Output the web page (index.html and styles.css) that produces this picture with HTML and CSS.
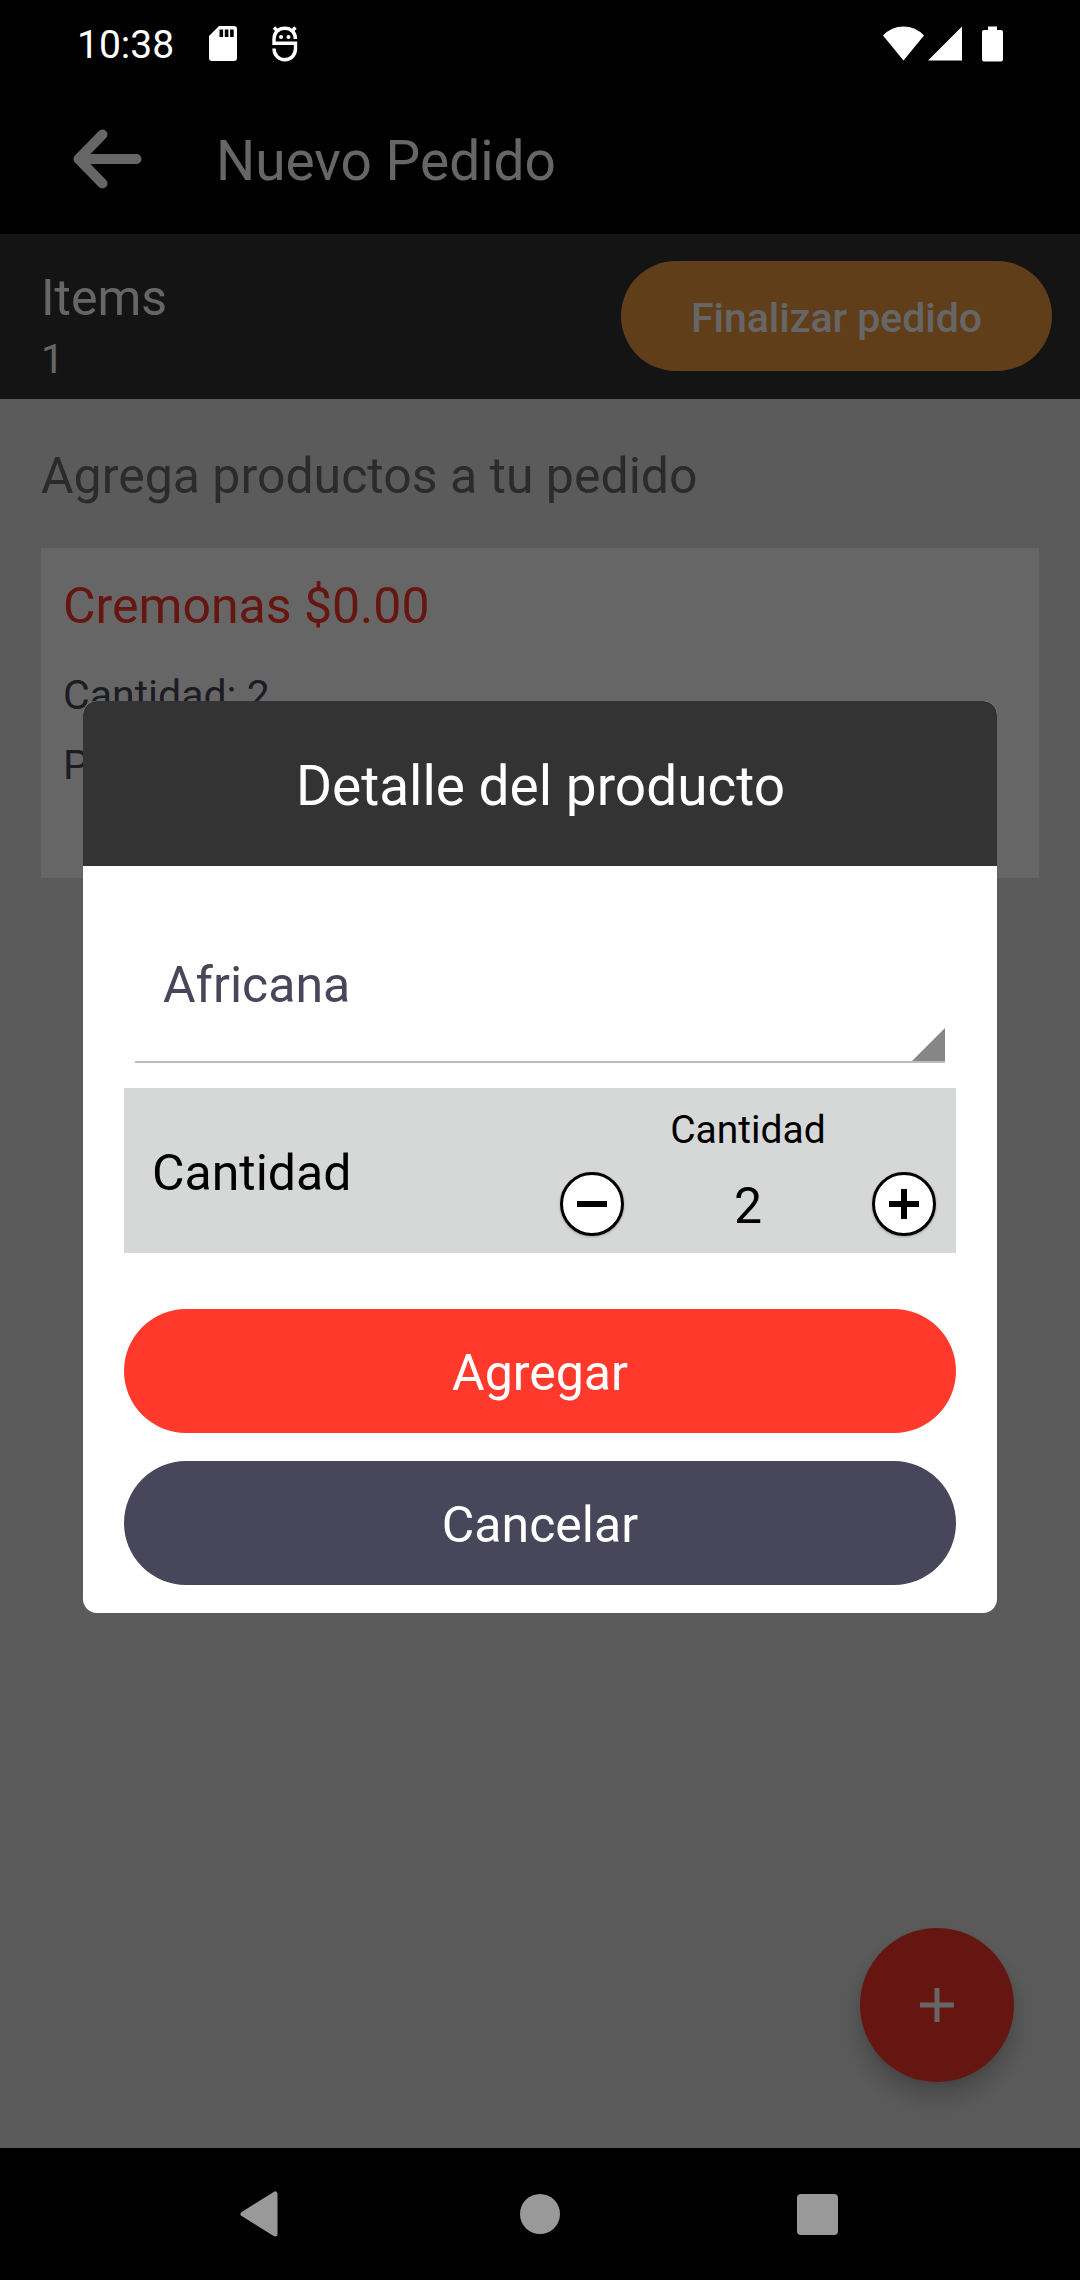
FILE: index.html
```
<!DOCTYPE html>
<html lang="es">
<head>
<meta charset="utf-8">
<title>Nuevo Pedido</title>
<link rel="stylesheet" href="styles.css">
</head>
<body>
<div class="screen">
  <header class="status-bar">
    <span class="clock">10:38</span>
    <svg class="sd-card" width="28" height="35" viewBox="0 0 28 35"><path d="M10 0H25Q28 0 28 3V32Q28 35 25 35H3Q0 35 0 32V10Z" fill="#fff"/><path d="M10.500 3.500h3.600v7.500h-3.600zM15.800 3.500h3.600v7.500h-3.600zM21.100 3.500h3.600v7.500h-3.600z" fill="#000"/></svg>
    <svg class="debug" width="26" height="36" viewBox="0 0 26 36" fill="none" stroke="#fff" stroke-width="3.400"><path d="M23.500 13C23.500 6.500 19 2.300 12.800 2.300S2 6.500 2 13V17.200H23.500V22.500C23.500 29.500 18.500 33.700 12.800 33.700S2 29.500 2 22.500"/><path d="M2 1.500L6 5.500M23.500 1.500L19.600 5.500"/><circle cx="9" cy="11" r="2" fill="#fff" stroke="none"/><circle cx="16.500" cy="11" r="2" fill="#fff" stroke="none"/></svg>
    <svg class="signals" width="122" height="36" viewBox="0 0 122 36" fill="#fff"><path d="M0 9.500Q8.500 0.500 20.500 0.500T41 9.500L20.500 34.500Z"/><path d="M45 34.500L79 0.500V34.500Z"/><path d="M105 0.500h9v3.500h4q2 0 2 2V33.500q0 2-2 2h-17q-2 0-2-2V6q0-2 2-2h4z"/></svg>
  </header>
  <div class="app-bar">
    <svg class="back" width="69" height="60" viewBox="0 0 69 60" fill="none" stroke="#fff" stroke-width="10" stroke-linecap="round" stroke-linejoin="round"><path d="M29.500 5.500L5.500 30L29.500 54.500M5.500 30H63.500"/></svg>
    <h1 class="app-title">Nuevo Pedido</h1>
  </div>
  <div class="summary">
    <div class="summary-items">
      <div class="items-label">Items</div>
      <div class="items-count">1</div>
    </div>
    <button class="finish">Finalizar pedido</button>
  </div>
  <main class="content">
    <h2 class="hint">Agrega productos a tu pedido</h2>
    <article class="card">
      <div class="card-name">Cremonas $0.00</div>
      <div class="card-line">Cantidad: 2</div>
      <div class="card-line card-price">P</div>
    </article>
    <button class="fab"><svg width="34" height="34" viewBox="0 0 34 34"><path d="M17 0V34M0 17H34" stroke="#fff" stroke-width="5"/></svg></button>
  </main>
  <nav class="nav-bar">
    <svg width="40" height="46" viewBox="0 0 40 46"><path d="M36 3V43L4 23Z" fill="#999" stroke="#999" stroke-width="5" stroke-linejoin="round"/></svg>
    <svg class="home" width="40" height="40" viewBox="0 0 40 40"><circle cx="20" cy="20" r="20" fill="#999"/></svg>
    <svg width="41" height="41" viewBox="0 0 41 41"><rect width="41" height="41" rx="4" fill="#999"/></svg>
  </nav>
  <div class="scrim">
    <section class="dialog">
      <h2 class="dialog-title">Detalle del producto</h2>
      <div class="dialog-body">
        <div class="spinner">
          <span>Africana</span>
          <svg class="corner" width="33" height="33" viewBox="0 0 33 33"><path d="M33 0V33H0Z" fill="#868686"/></svg>
        </div>
        <div class="quantity">
          <span class="quantity-label">Cantidad</span>
          <div class="stepper">
            <span class="stepper-label">Cantidad</span>
            <div class="stepper-row">
              <button class="round"><svg width="30" height="30" viewBox="0 0 30 30"><path d="M0 15H30" stroke="#000" stroke-width="6"/></svg></button>
              <span class="value">2</span>
              <button class="round"><svg width="30" height="30" viewBox="0 0 30 30"><path d="M0 15H30M15 0V30" stroke="#000" stroke-width="6"/></svg></button>
            </div>
          </div>
        </div>
        <div class="actions">
          <button class="action add">Agregar</button>
          <button class="action cancel">Cancelar</button>
        </div>
      </div>
    </section>
  </div>
</div>
</body>
</html>
```
FILE: styles.css
```
* { box-sizing: border-box; }
body { margin: 0; font-family: Roboto, sans-serif; }
h1, h2 { margin: 0; font-weight: 400; }
button { border: 0; padding: 0; font-family: inherit; display: flex; align-items: center; justify-content: center; }
svg { display: block; flex: none; }

.screen { position: relative; width: 1080px; height: 2280px; display: flex; flex-direction: column; overflow: hidden; background: #000; }

.status-bar { height: 87px; display: flex; align-items: center; padding: 0 75px 0 77px; color: #fff; }
.clock { width: 132px; font-size: 39px; line-height: 46px; padding-top: 3px; }
.debug { margin-left: 35px; }
.signals { margin-left: auto; }

.app-bar { height: 147px; display: flex; align-items: center; padding-left: 73px; color: #fff; }
.back { margin-bottom: 4px; }
.app-title { margin-left: 74px; padding-top: 1px; font-size: 55px; line-height: 66px; }

.summary { height: 165px; background: #333; color: #fff; display: flex; align-items: flex-start; justify-content: space-between; padding: 27px 28px 0 41px; }
.summary-items { padding-top: 8px; }
.items-label { font-size: 50px; line-height: 58px; }
.items-count { margin-top: 8px; font-size: 41px; line-height: 48px; }
.finish { width: 431px; height: 110px; border-radius: 55px; background: #f39b41; color: #fff; font-size: 41px; font-weight: 500; padding-top: 4px; }

.content { flex: 1; background: #e4e4e4; padding: 48px 41px 0; display: flex; flex-direction: column; }
.hint { font-size: 50px; line-height: 58px; color: #6b6b6b; }
.card { margin-top: 43px; height: 330px; background: #fff; padding: 29px 22px; color: #48465a; }
.card-name { font-size: 50px; line-height: 58px; color: #ff392c; }
.card-line { margin-top: 36px; font-size: 41px; line-height: 49px; }
.card-price { margin-top: 21px; }
.fab { align-self: flex-end; margin: auto 25px 66px 0; width: 154px; height: 154px; border-radius: 50%; background: #ff392c; box-shadow: 0 15px 28px rgba(0, 0, 0, .24), 0 3px 6px rgba(0, 0, 0, .06); }

.nav-bar { height: 132px; background: #000; display: flex; align-items: center; justify-content: space-between; padding: 0 242px 0 239px; position: relative; z-index: 2; }
.home { margin-left: 4px; }

.scrim { position: absolute; inset: 87px 0 132px; background: rgba(0, 0, 0, .6); padding: 614px 83px 0; }
.dialog { height: 912px; border-radius: 14px; background: #fff; overflow: hidden; }
.dialog-title { height: 165px; padding-left: 1px; background: #333; color: #fff; font-size: 55px; line-height: 171px; text-align: center; }
.dialog-body { padding: 0 41px; }
.spinner { margin: 0 11px; height: 197px; border-bottom: 2px solid #bcbcbc; display: flex; align-items: flex-end; justify-content: space-between; font-size: 50px; line-height: 58px; color: #48465a; }
.spinner span { padding: 0 0 47px 28px; }
.quantity { margin-top: 25px; height: 165px; background: #d6d8d7; color: #000; display: flex; justify-content: space-between; padding: 0 20px 0 28px; }
.quantity-label { font-size: 50px; line-height: 170px; }
.stepper { width: 376px; padding-top: 20px; display: flex; flex-direction: column; gap: 19px; }
.stepper-label { text-align: center; font-size: 39px; line-height: 45px; }
.stepper-row { height: 64px; display: flex; align-items: center; justify-content: space-between; }
.round { width: 64px; height: 64px; border: 3px solid #000; border-radius: 50%; background: #fff; box-shadow: 0 1px 3px rgba(0, 0, 0, .25); }
.value { font-size: 50px; line-height: 58px; padding-top: 3px; }
.actions { margin-top: 56px; display: flex; flex-direction: column; gap: 28px; }
.action { height: 124px; border-radius: 62px; color: #fff; font-size: 50px; padding-top: 4px; }
.add { background: #ff392c; }
.cancel { background: #48465a; }
```
